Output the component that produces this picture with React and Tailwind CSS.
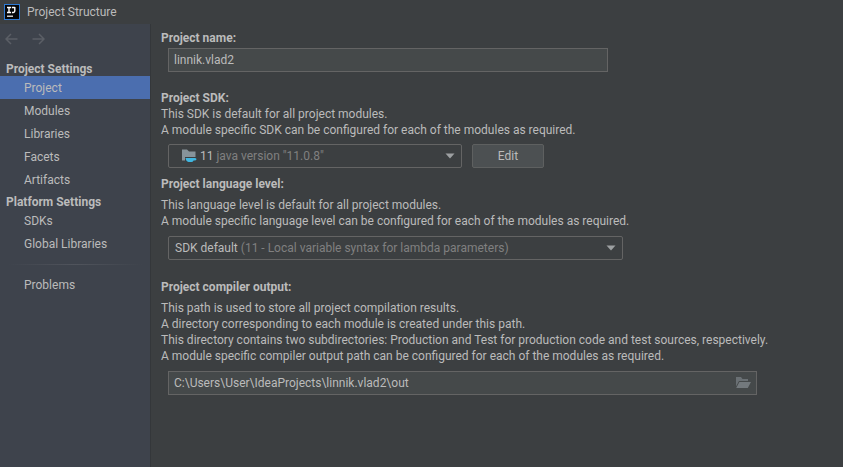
import React from "react";

function AppLogo() {
  return (
    <svg width="16" height="16" viewBox="0 0 16 16" aria-hidden="true">
      <rect width="16" height="16" fill="#2e7bd6" />
      <rect x="1" y="1" width="14" height="14" fill="#050608" />
      <path d="M3 3.5h4M3 8.5h4M5 3.5v5M7.8 3.5h3M10.8 3v4.1q0 1.4-1.5 1.4H7.9" fill="none" stroke="#fff" strokeWidth="1.4" />
      <rect x="3" y="11.6" width="6" height="1.2" fill="#fff" />
    </svg>
  );
}

function Arrow({ d }) {
  return (
    <svg width="13" height="12" viewBox="0 0 13 12" fill="none" stroke="#5b5f66" strokeWidth="1.5" aria-hidden="true">
      <path d={d} />
    </svg>
  );
}

function SdkIcon() {
  return (
    <svg width="16" height="16" viewBox="0 0 16 16" aria-hidden="true">
      <path d="M1 1.5h5l2 2h6.5V9H4v3.5H1z" fill="#87939a" />
      <path d="M4.5 10H13.5q2 0 2 1.2t-2.2 1.2H12.6Q11.8 14 10.5 14H7.5Q5 13.6 4.5 10z" fill="#40b6e0" />
    </svg>
  );
}

function FolderIcon() {
  return (
    <svg width="16" height="14" viewBox="0 0 16 14" aria-hidden="true">
      <path d="M1 1h5l1.5 2H13v2H4L1 10.5z" fill="#6a7074" />
      <path d="M4.4 6H16l-3.2 6H1.2z" fill="#73797d" />
    </svg>
  );
}

function Combo({ id, label, className, icon, main, hint }) {
  return (
    <div className={`relative flex h-6 w-full items-center rounded-xs border border-[#646464] ${className}`}>
      <select
        id={id}
        aria-label={label}
        className="absolute inset-0 h-full w-full appearance-none rounded-xs bg-transparent text-transparent outline-none focus:ring-1 focus:ring-[#4b6eaf]"
      >
        <option aria-label={`${main} ${hint}`} />
      </select>
      <div className="pointer-events-none flex min-w-0 flex-1 items-center gap-[3px]">
        {icon}
        <span className="truncate">
          {main} <span className="text-[#808080]">{hint}</span>
        </span>
      </div>
      <svg className="pointer-events-none mr-1.5 shrink-0" width="10" height="6" viewBox="0 0 10 6" aria-hidden="true">
        <path d="M0.5 0.5h9L5 5.5z" fill="#9da0a2" />
      </svg>
    </div>
  );
}

function NavItem({ children, active }) {
  return (
    <li>
      <a
        href="#"
        aria-current={active ? "page" : undefined}
        className={`flex h-[23px] items-center pl-6 ${active ? "bg-[#4b6eaf]" : ""}`}
      >
        {children}
      </a>
    </li>
  );
}

function Sidebar() {
  return (
    <nav className="flex w-[151px] shrink-0 flex-col border-r border-[#34373a] bg-[#3e434c]">
      <div className="flex gap-3.5 px-[5px] pt-[9px]">
        <button type="button" aria-label="Back"><Arrow d="M12.5 6H1M6 1L1 6l5 5" /></button>
        <button type="button" aria-label="Forward"><Arrow d="M0.5 6H12M7 1l5 5-5 5" /></button>
      </div>
      <h2 className="mt-[17px] pl-1.5 font-bold leading-[14px]">Project Settings</h2>
      <ul>
        <NavItem active>Project</NavItem>
        <NavItem>Modules</NavItem>
        <NavItem>Libraries</NavItem>
        <NavItem>Facets</NavItem>
        <NavItem>Artifacts</NavItem>
      </ul>
      <h2 className="pt-1 pl-1.5 font-bold leading-[14px]">Platform Settings</h2>
      <ul>
        <NavItem>SDKs</NavItem>
        <NavItem>Global Libraries</NavItem>
      </ul>
      <hr className="mx-2 mt-[9px] mb-2 h-px border-0 bg-linear-to-r from-transparent via-[#50545c] to-transparent" />
      <ul>
        <NavItem>Problems</NavItem>
      </ul>
    </nav>
  );
}

export default function App() {
  return (
    <div className="flex min-h-screen flex-col bg-[#3c3f41] font-['Roboto','Noto_Sans',sans-serif] text-xs text-[#bbbbbb]">
      <header className="flex h-6 items-center gap-[7px] pl-1">
        <AppLogo />
        <h1>Project Structure</h1>
      </header>
      <div className="flex flex-1">
        <Sidebar />
        <main className="min-w-0 flex-1 px-2.5 pt-1.5 leading-4">
          <section>
            <label htmlFor="name" className="block font-bold">Project name:</label>
            <div className="mt-0.5 pl-[7px]">
              <input
                id="name"
                defaultValue="linnik.vlad2"
                className="block h-6 w-full max-w-[440px] border border-[#646464] bg-[#45494a] px-[5px] outline-none"
              />
            </div>
          </section>
          <section className="mt-[18px]">
            <h2 className="font-bold">Project SDK:</h2>
            <p>This SDK is default for all project modules.</p>
            <p>A module specific SDK can be configured for each of the modules as required.</p>
            <div className="mt-1.5 flex gap-2.5 pl-[7px]">
              <Combo
                id="sdk"
                label="Project SDK"
                className="max-w-[294px] pl-3"
                icon={<SdkIcon />}
                main="11"
                hint={'java version "11.0.8"'}
              />
              <button type="button" className="h-6 w-[72px] rounded-xs border border-[#5e6060] bg-[#4c5052]">Edit</button>
            </div>
          </section>
          <section className="mt-2">
            <h2 className="font-bold">Project language level:</h2>
            <p className="mt-[5px]">This language level is default for all project modules.</p>
            <p>A module specific language level can be configured for each of the modules as required.</p>
            <div className="mt-[7px] pl-[7px]">
              <Combo
                id="level"
                label="Project language level"
                className="max-w-[455px] pl-1.5"
                main="SDK default"
                hint="(11 - Local variable syntax for lambda parameters)"
              />
            </div>
          </section>
          <section className="mt-[19px]">
            <label htmlFor="output" className="block font-bold">Project compiler output:</label>
            <p className="mt-[5px]">This path is used to store all project compilation results.</p>
            <p>A directory corresponding to each module is created under this path.</p>
            <p>This directory contains two subdirectories: Production and Test for production code and test sources, respectively.</p>
            <p>A module specific compiler output path can be configured for each of the modules as required.</p>
            <div className="mt-[7px] pl-[7px]">
              <div className="flex h-6 w-full max-w-[589px] items-center border border-[#646464] bg-[#45494a] pr-[5px]">
                <input
                  id="output"
                  defaultValue="C:\Users\User\IdeaProjects\linnik.vlad2\out"
                  className="h-full min-w-0 flex-1 bg-transparent px-[5px] outline-none"
                />
                <button type="button" aria-label="Browse"><FolderIcon /></button>
              </div>
            </div>
          </section>
        </main>
      </div>
    </div>
  );
}
